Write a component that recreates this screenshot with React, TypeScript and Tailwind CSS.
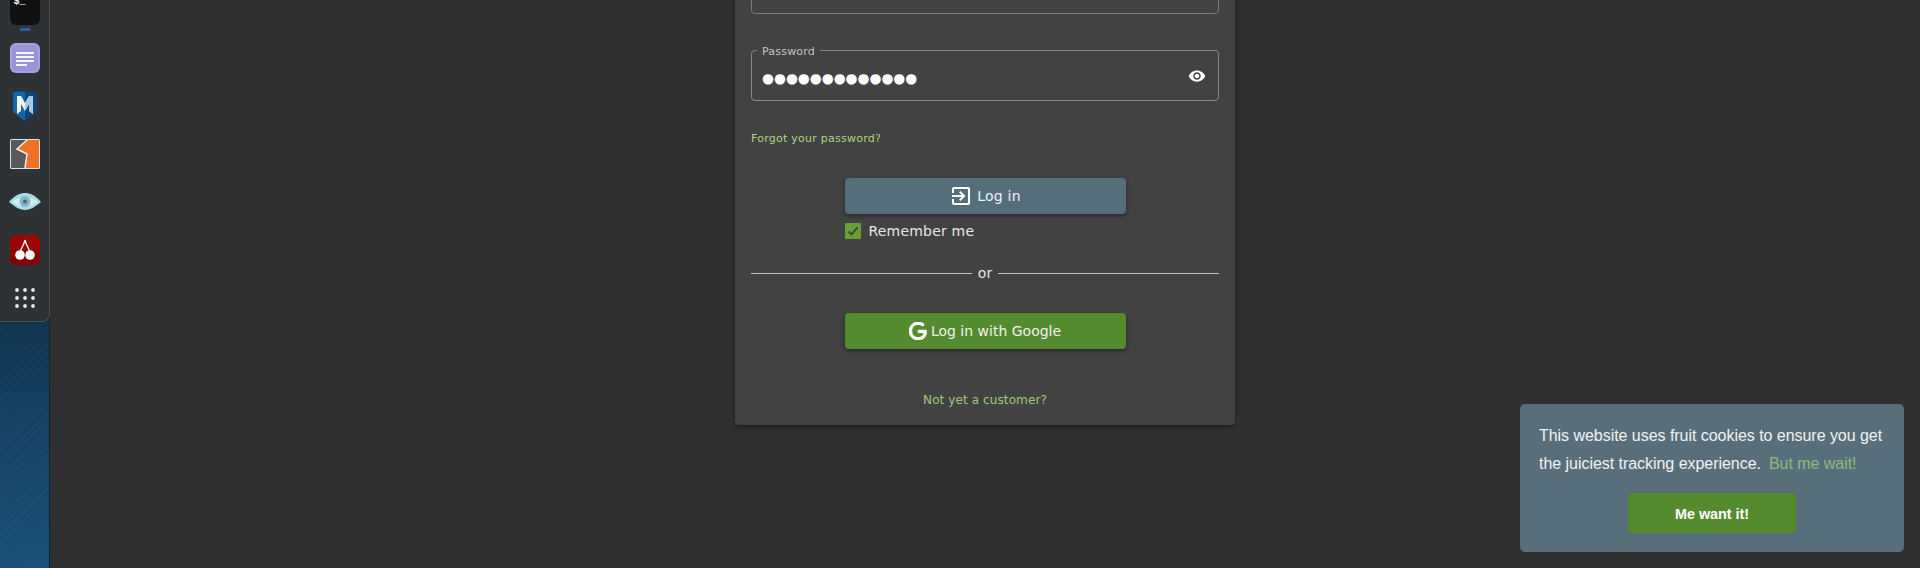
import React from "react";

const sans = "font-['DejaVu_Sans',sans-serif]";

function NotesIcon() {
    return (
        <svg width="30" height="30" viewBox="0 0 30 30">
            <rect width="30" height="30" rx="6" fill="#9a93d8" />
            <rect x="1" y="1" width="28" height="28" rx="5" fill="none" stroke="#b3aee6" strokeWidth="1" />
            <path d="M6 9h18v2H6zM6 13h18v2H6zM6 17h18v2H6zM6 21h11v2H6z" fill="#f6f5fd" />
        </svg>
    );
}

function MsfIcon() {
    return (
        <svg width="24" height="30" viewBox="0 0 24 30">
            <path d="M0 1.500C4 0 20 0 24 1.500V21L12 30 0 21z" fill="#0d4578" />
            <path d="M0 1.500C4 0 12 .5 12 .5V30L0 21z" fill="#1466a6" />
            <path d="M4 23V5h4l4 7 4-7h4v18l-4-3V13l-4 7-4-7v7z" fill="#eef3f8" />
            <path d="M12 12l4-7h4v18l-4-3V13l-4 7z" fill="#a9c8e2" />
        </svg>
    );
}

function BurpIcon() {
    return (
        <svg width="30" height="30" viewBox="0 0 30 30">
            <rect width="30" height="30" rx="1.500" fill="#e0e0e0" />
            <rect x="1" y="1" width="28" height="28" fill="#58595b" />
            <path d="M29 1H17L7 10l10 5-2 14h14z" fill="#ee7127" />
            <path d="M17 1L7 10l10 5-2 14" fill="none" stroke="#f2f2f2" strokeWidth="1.500" />
        </svg>
    );
}

function EyeIcon() {
    return (
        <svg width="32" height="18" viewBox="0 0 32 18">
            <path d="M0 9C6 2 11 0 16 0s10 2 16 9c-6 5-11 8-16 8S6 14 0 9z" fill="#a9dcea" />
            <path d="M3 9c5-4 9-5 13-5s8 1 13 5c-5 3-9 5-13 5S8 12 3 9z" fill="#d0edf4" />
            <circle cx="16" cy="8.500" r="5.500" fill="#86b7c9" />
            <circle cx="16" cy="8.500" r="2" fill="#4d6a78" />
        </svg>
    );
}

function CherryIcon() {
    return (
        <svg width="30" height="30" viewBox="0 0 30 30">
            <rect width="30" height="30" rx="6" fill="#9b0707" />
            <path d="M0 15h30v9a6 6 0 0 1-6 6H6a6 6 0 0 1-6-6z" fill="#840404" />
            <path d="M15 5c-1 5-4 8-5 13M15 5c1 5 4 8 5 13" fill="none" stroke="#fff" strokeWidth="1.300" />
            <circle cx="10" cy="20" r="4.800" fill="#fff" />
            <circle cx="20" cy="20" r="4.800" fill="#fff" />
        </svg>
    );
}

function GridIcon() {
    return (
        <svg width="20" height="20" viewBox="0 0 20 20" fill="#e8e8e8">
            {[2, 10, 18].flatMap((y) =>
                [2, 10, 18].map((x) => <circle key={`${x}-${y}`} cx={x} cy={y} r="1.900" />)
            )}
        </svg>
    );
}

function DockSlot({ children }: { children: React.ReactNode }) {
    return <div className="flex h-12 w-full items-center justify-center">{children}</div>;
}

function Dock() {
    return (
        <aside className="relative z-10 -mt-[14px] h-[336px] w-[50px] rounded-br-[8px] border-r border-b border-[#4b5155] bg-[#2e3235]">
            <DockSlot>
                <div className="flex h-[30px] w-[30px] items-start rounded-[6px] bg-[#111] px-1 font-['Liberation_Mono',monospace] text-[10px] leading-[14px] font-bold text-white">
                    $_
                </div>
            </DockSlot>
            <div className="absolute top-[42px] left-[20px] h-[3px] w-[10px] bg-[#2a5ea8]" />
            <DockSlot><NotesIcon /></DockSlot>
            <DockSlot><MsfIcon /></DockSlot>
            <DockSlot><BurpIcon /></DockSlot>
            <DockSlot><EyeIcon /></DockSlot>
            <DockSlot><CherryIcon /></DockSlot>
            <DockSlot><GridIcon /></DockSlot>
        </aside>
    );
}

function LoginCard() {
    return (
        <div className={`-mt-[52px] flex w-[500px] flex-col rounded-[4px] bg-[#424242] px-4 pt-4 shadow-[0_2px_4px_rgba(0,0,0,0.35)] ${sans}`}>
            <div className="h-[50px] rounded-[4px] border border-[#7d7d7d]" />

            <div className="relative mt-9 flex h-[51px] items-center rounded-[4px] border border-[#8a8a8a] pr-[12px] pl-[10px]">
                <span className="absolute -top-[6px] left-[5px] bg-[#424242] px-[5px] text-[11px] leading-[13px] tracking-[0.2px] text-[#c4c4c4]">
                    Password
                </span>
                <input
                    type="text"
                    readOnly
                    value="●●●●●●●●●●●●●"
                    className="mt-[6px] min-w-0 flex-1 bg-transparent text-[13.7px] text-white outline-none"
                />
                <svg width="18" height="18" viewBox="0 0 24 24" fill="#fff" className="mt-[1px]">
                    <path d="M12 4.500C7 4.500 2.730 7.610 1 12c1.730 4.390 6 7.500 11 7.500s9.270-3.110 11-7.500c-1.730-4.390-6-7.500-11-7.500zM12 17c-2.760 0-5-2.240-5-5s2.240-5 5-5 5 2.240 5 5-2.240 5-5 5zm0-8c-1.660 0-3 1.340-3 3s1.340 3 3 3 3-1.340 3-3-1.340-3-3-3z" />
                </svg>
            </div>

            <a className="mt-[30px] text-[11px] leading-[15px] tracking-[0.25px] text-[#aed581]">
                Forgot your password?
            </a>

            <button className="mx-auto mt-[32px] flex h-9 w-[281px] items-center justify-center gap-[4px] rounded-[4px] bg-[#546e7a] text-[14px] tracking-[0.2px] text-[#f0f0f0] shadow-[0_2px_4px_rgba(0,0,0,0.4)]">
                <svg width="24" height="24" viewBox="0 0 24 24" fill="#fff">
                    <path d="M19,3H5C3.890,3 3,3.890 3,5V9H5V5H19V19H5V15H3V19A2,2 0 0,0 5,21H19A2,2 0 0,0 21,19V5C21,3.890 20.100,3 19,3M10.080,15.580L11.500,17L16.500,12L11.500,7L10.080,8.410L12.670,11H3V13H12.670L10.080,15.580Z" />
                </svg>
                Log in
            </button>

            <label className="mx-auto mt-[9px] flex w-[281px] items-center gap-2 text-[14px] leading-4 tracking-[0.2px] text-[#e6e6e6]">
                <span className="flex h-4 w-4 items-center justify-center rounded-[1px] bg-[#689f38]">
                    <svg width="12" height="12" viewBox="0 0 24 24" fill="none" stroke="#303030" strokeWidth="2.800">
                        <path d="M3 13l6 6L21 5" />
                    </svg>
                </span>
                Remember me
            </label>

            <div className="mt-[26px] flex items-center gap-[5px] text-[14px] leading-4 text-[#e6e6e6]">
                <div className="h-px flex-1 bg-[#c4c4c4]" />
                <span className="px-[1px]">or</span>
                <div className="h-px flex-1 bg-[#c4c4c4]" />
            </div>

            <button className="mx-auto mt-[32px] flex h-9 w-[281px] items-center justify-center gap-[4px] rounded-[4px] bg-[#558b2f] text-[14px] text-[#f0f0f0] shadow-[0_2px_4px_rgba(0,0,0,0.4)]">
                <svg width="18" height="18" viewBox="2 2 20 20" fill="#fff" stroke="#fff" strokeWidth="1">
                    <path d="M21.350,11.100H12.180V13.830H18.690C18.360,17.640 15.190,19.270 12.190,19.270C8.360,19.270 5,16.250 5,12C5,7.900 8.200,4.730 12.200,4.730C15.290,4.730 17.100,6.700 17.100,6.700L19,4.720C19,4.720 16.560,2 12.100,2C6.420,2 2.030,6.800 2.030,12C2.030,17.050 6.160,22 12.250,22C17.600,22 21.500,18.330 21.500,12.910C21.500,11.760 21.350,11.100 21.350,11.100V11.100Z" />
                </svg>
                Log in with Google
            </button>

            <a className="mt-[43px] mb-[17px] text-center text-[12px] leading-4 tracking-[0.1px] text-[#a3c77b]">
                Not yet a customer?
            </a>
        </div>
    );
}

function CookieBanner() {
    return (
        <div className="absolute right-4 bottom-4 flex w-[384px] flex-col rounded-[5px] bg-[#586f7b] px-[19px] pt-[18px] font-['Liberation_Sans',sans-serif] text-[16px] leading-[28px] tracking-[-0.04px] text-[#f0f3f4]">
            <p>
                This website uses fruit cookies to ensure you get the juiciest tracking experience.
                <a className="ml-[8px] text-[#93b67a]">But me wait!</a>
            </p>
            <button className="mx-auto mt-[15px] mb-[19px] h-10 w-[168px] rounded-[5px] bg-[#558b2f] pt-[1px] text-[14.4px] font-bold text-white">
                Me want it!
            </button>
        </div>
    );
}

export default function App() {
    return (
        <div className="relative flex h-[568px] w-[1920px] overflow-hidden bg-[#303030]">
            <div className="h-full w-[50px] shrink-0 border-r border-[#0c2436] bg-[repeating-linear-gradient(135deg,rgba(255,255,255,0.018)_0px,rgba(255,255,255,0.018)_2px,transparent_2px,transparent_6px),linear-gradient(175deg,#0d2a40_0%,#10344f_55%,#1a5078_100%)]">
                <Dock />
            </div>
            <main className="flex flex-1 flex-col items-center">
                <LoginCard />
            </main>
            <CookieBanner />
        </div>
    );
}
